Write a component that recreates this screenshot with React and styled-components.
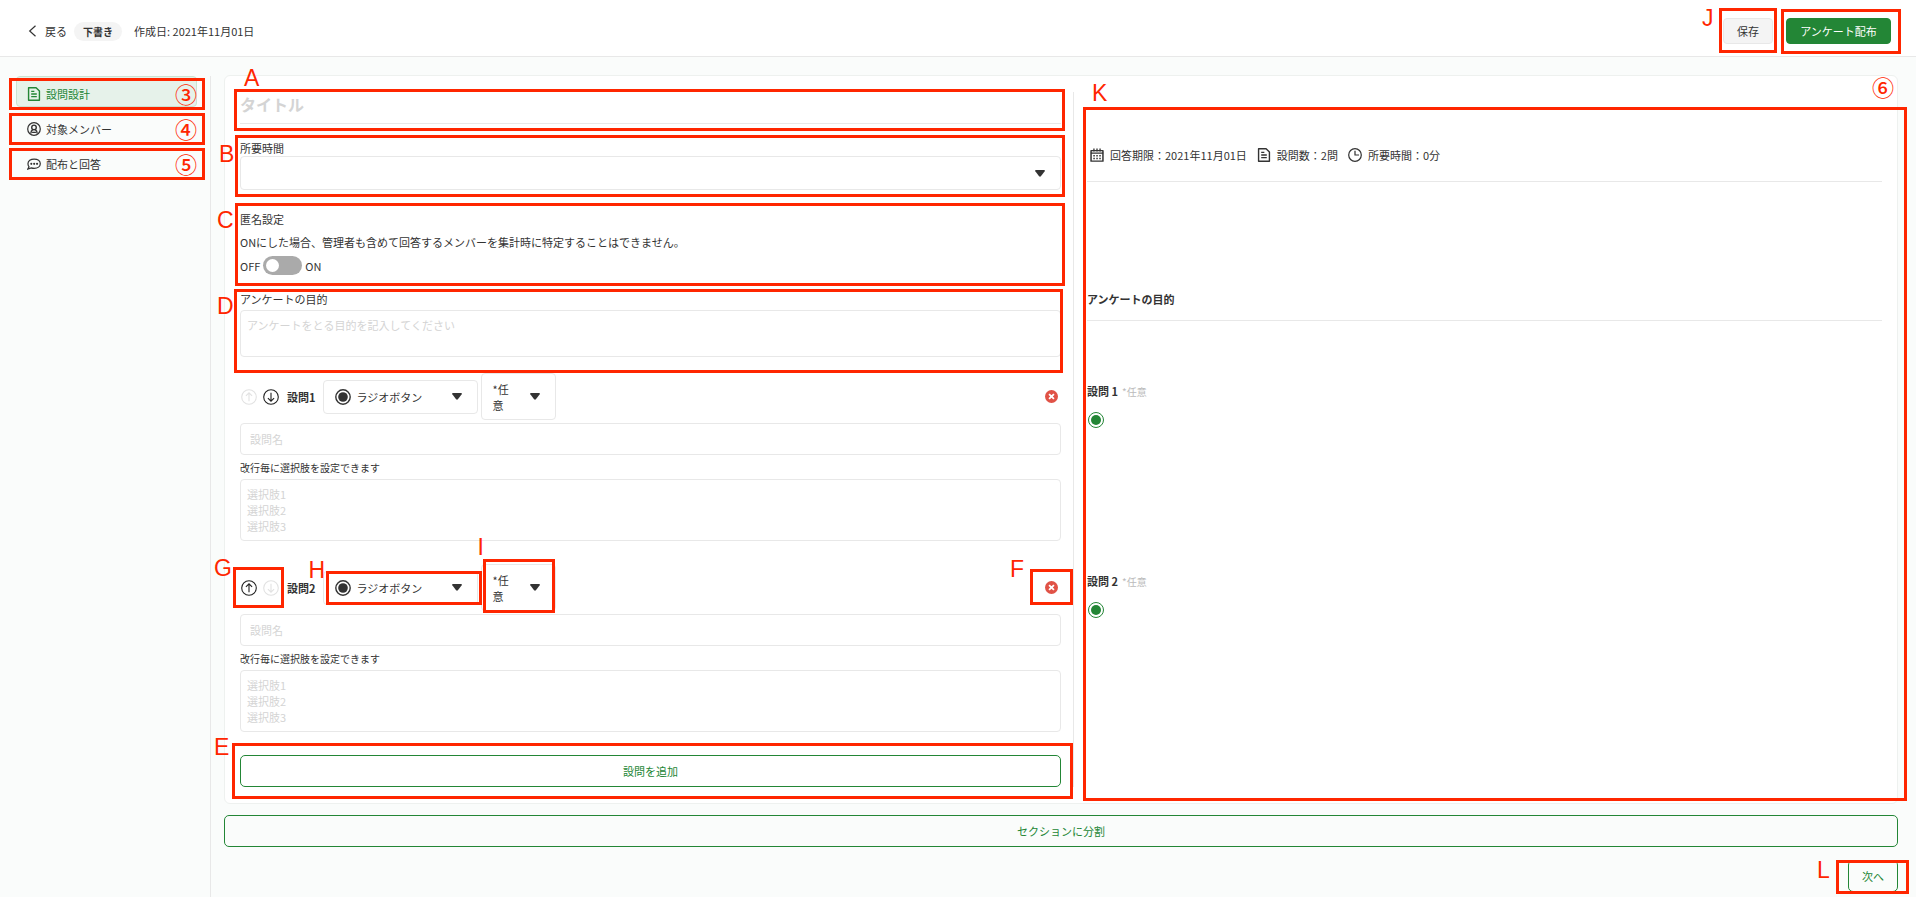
import React, { useState } from "react";
import styled, { createGlobalStyle } from "styled-components";

const GREEN = "#238636";
const RED = "#ff2600";
const LINE = "#e8e8e8";
const HINT = "#d4d4d4";

const GlobalStyle = createGlobalStyle`
  * {
    box-sizing: border-box;
  }

  body {
    margin: 0;
    background: #fafcfb;
    color: #333;
    font-family: "Noto Sans CJK JP", "Noto Sans", sans-serif;
    font-size: 11px;
    line-height: 16px;
  }

  button,
  input,
  select,
  textarea {
    font: inherit;
    color: inherit;
  }

  ::placeholder {
    color: ${HINT};
    opacity: 1;
  }
`;

const Page = styled.div`
  min-height: 100vh;
  display: flex;
  flex-direction: column;
`;

const Header = styled.header`
  display: flex;
  justify-content: space-between;
  align-items: center;
  padding: 18px 25px 12px 28px;
  background: #fff;
  border-bottom: 1px solid ${LINE};
`;

const HeaderGroup = styled.div`
  display: flex;
  align-items: center;
  gap: ${(props) => props.$gap || 0}px;
`;

const BackLink = styled.a`
  display: flex;
  align-items: center;
  gap: 8px;
  color: inherit;
  text-decoration: none;
`;

const Badge = styled.span`
  margin: 0 12px 0 7px;
  padding: 2px 9px 1px;
  border-radius: 10px;
  background: #f4f4f4;
  font-size: 10px;
  font-weight: 700;
`;

const Anchor = styled.div`
  position: relative;
`;

const Button = styled.button`
  display: block;
  height: 26px;
  width: ${(props) => props.$width}px;
  padding: 0;
  border: 1px solid ${(props) => (props.$primary ? GREEN : LINE)};
  border-radius: 4px;
  background: ${(props) => (props.$primary ? GREEN : "#f4f4f4")};
  color: ${(props) => (props.$primary ? "#fff" : "#333")};
  cursor: pointer;
`;

const OutlineButton = styled.button`
  display: block;
  width: ${(props) => (props.$width ? `${props.$width}px` : "100%")};
  height: 32px;
  padding: 0;
  border: 1px solid ${GREEN};
  border-radius: 5px;
  background: transparent;
  color: ${GREEN};
  cursor: pointer;
`;

const Body = styled.div`
  flex: 1;
  display: flex;
`;

const Sidebar = styled.nav`
  flex: 0 0 211px;
  display: flex;
  flex-direction: column;
  gap: 4px;
  margin-top: 19px;
  padding: 0 13px 0 16px;
  border-right: 1px solid ${LINE};
`;

const NavItem = styled.a`
  position: relative;
  display: flex;
  align-items: center;
  gap: 5px;
  height: 31px;
  padding: 4px 0 0 10px;
  border: 1px solid ${(props) => (props.$active ? "#cbe3d2" : "transparent")};
  border-radius: 4px;
  background: ${(props) => (props.$active ? "#e6f2ea" : "transparent")};
  color: ${(props) => (props.$active ? GREEN : "#333")};
  text-decoration: none;
`;

const Main = styled.main`
  flex: 1;
  min-width: 0;
  padding: 18px 18px 5px 13px;
`;

const Card = styled.section`
  position: relative;
  display: flex;
  margin-bottom: 11px;
  padding: 16px 15px;
  border: 1px solid #eef1ef;
  border-radius: 6px;
  background: #fff;
`;

const Editor = styled.form`
  flex: 0 0 50%;
  box-sizing: content-box;
  padding-right: 12px;
  border-right: 1px solid ${LINE};
`;

const Preview = styled.div`
  flex: 1;
  min-width: 0;
  padding-left: 13px;
`;

const Block = styled.div`
  position: relative;
  margin-bottom: ${(props) => props.$space || 0}px;
`;

const TitleInput = styled.input`
  display: block;
  width: 100%;
  height: 32px;
  padding: 0 0 8px;
  border: 0;
  border-bottom: 1px solid ${LINE};
  background: transparent;
  font-size: 16px;
  font-weight: 700;
`;

const Label = styled.label`
  display: block;
  margin-bottom: ${(props) => props.$space || 0}px;
`;

const SmallLabel = styled.label`
  display: block;
  margin: 5px 0 3px;
  font-size: 10px;
`;

const TextInput = styled.input`
  display: block;
  width: 100%;
  height: 32px;
  margin-top: 3px;
  padding: 0 9px;
  border: 1px solid ${LINE};
  border-radius: 4px;
  background: #fff;
`;

const TextArea = styled.textarea`
  display: block;
  width: 100%;
  height: ${(props) => props.$height}px;
  padding: 6px;
  border: 1px solid ${LINE};
  border-radius: 4px;
  background: #fff;
  resize: none;
  overflow: hidden;
`;

const SelectBox = styled.div`
  position: relative;
  display: flex;
  align-items: center;
  width: ${(props) => (props.$width ? `${props.$width}px` : "100%")};
  height: ${(props) => props.$height || 34}px;
  border: 1px solid ${LINE};
  border-radius: 4px;
  background: #fff;

  > svg {
    position: absolute;
    pointer-events: none;
  }

  > svg:first-child {
    left: 11px;
  }

  > svg:last-child {
    right: 15px;
  }
`;

const Select = styled.select`
  width: 100%;
  height: 100%;
  padding: 0 30px 0 ${(props) => props.$indent || 11}px;
  border: 0;
  background: transparent;
  appearance: none;
  cursor: pointer;
`;

// the closed box wraps its text, so the select itself lies invisible on top
const CoverSelect = styled(Select)`
  position: absolute;
  inset: 0;
  opacity: 0;
`;

const WrappedValue = styled.span`
  width: 27px;
  margin-left: 11px;
  word-break: break-all;
`;

const SwitchRow = styled.label`
  display: flex;
  align-items: center;
  gap: 3px;
  margin-top: 6px;
`;

const Switch = styled.input`
  appearance: none;
  width: 39px;
  height: 19px;
  margin: 0;
  padding: 3px;
  border-radius: 10px;
  background: #aaa;
  cursor: pointer;

  &::before {
    content: "";
    display: block;
    width: 13px;
    height: 13px;
    border-radius: 50%;
    background: #fff;
  }

  &:checked {
    background: ${GREEN};
  }

  &:checked::before {
    margin-left: auto;
  }
`;

const Paragraph = styled.p`
  margin: 7px 0 0;
`;

const QuestionBar = styled.div`
  display: flex;
  align-items: center;
  height: 47px;
`;

const Arrows = styled.div`
  position: relative;
  display: flex;
  gap: 6px;
  padding-left: 1px;
`;

const IconButton = styled.button`
  display: block;
  padding: 0;
  border: 0;
  background: transparent;
  color: #222;
  line-height: 0;
  cursor: pointer;

  &:disabled {
    color: #e2e2e2;
    cursor: default;
  }
`;

const QuestionName = styled.strong`
  margin: 0 7px 0 8px;
`;

const Cell = styled.div`
  position: relative;
  margin-right: 3px;
`;

const DeleteCell = styled.div`
  position: relative;
  margin-left: auto;
  padding-right: 3px;
`;

const Meta = styled.div`
  display: flex;
  gap: 10px;
  padding: 55px 0 18px 3px;
  border-bottom: 1px solid ${LINE};
`;

const MetaItem = styled.span`
  display: flex;
  align-items: center;
  gap: 6px;
`;

const PreviewHeading = styled.h2`
  margin: 109px 0 62px;
  padding-bottom: 13px;
  border-bottom: 1px solid ${LINE};
  font-size: 11px;
  font-weight: 700;
`;

const PreviewQuestion = styled.div`
  min-height: 190px;
`;

const PreviewName = styled.h3`
  margin: 0 0 12px;
  font-size: 11px;
  font-weight: 700;
`;

const Optional = styled.span`
  margin-left: 4px;
  color: #bbb;
  font-size: 10px;
  font-weight: 400;
`;

const Radio = styled.input`
  appearance: none;
  display: block;
  width: 16px;
  height: 16px;
  margin: 0 0 0 1px;
  padding: 2px;
  border: 1px solid ${GREEN};
  border-radius: 50%;
  background-clip: content-box;

  &:checked {
    background-color: ${GREEN};
  }
`;

const Footer = styled.div`
  display: flex;
  justify-content: flex-end;
  margin-top: 13px;
`;

// red review marks drawn over the form
const Frame = styled.span`
  position: absolute;
  z-index: 2;
  inset: ${(props) => props.$inset};
  border: 3px solid ${RED};
  pointer-events: none;
`;

const Letter = styled.span`
  position: absolute;
  z-index: 3;
  left: ${(props) => props.$left}px;
  top: ${(props) => props.$top}px;
  color: ${RED};
  font-family: "Liberation Sans", Arial, sans-serif;
  font-size: 23px;
  font-weight: 400;
  line-height: 16px;
  pointer-events: none;
`;

const Num = styled.span`
  position: absolute;
  z-index: 3;
  right: ${(props) => props.$right}px;
  top: ${(props) => props.$top}px;
  color: ${RED};
  font-size: 22px;
  font-weight: 500;
  line-height: 22px;
  pointer-events: none;
`;

const Svg = ({ size = 14, children, ...rest }) => (
  <svg
    width={size}
    height={size}
    viewBox="0 0 16 16"
    fill="none"
    stroke="currentColor"
    strokeWidth="1.4"
    aria-hidden="true"
    {...rest}
  >
    {children}
  </svg>
);

const FileIcon = () => (
  <Svg>
    <path d="M1.8 .8h8.600l3.800 3.800v10.600H1.800z" strokeWidth="1.6" strokeLinejoin="round" />
    <path d="M4.800 5h3.600M4.800 8h6.400M4.800 11h6.400" strokeWidth="1.500" />
  </Svg>
);

const MemberIcon = () => (
  <Svg>
    <circle cx="8" cy="8" r="7.200" />
    <circle cx="8" cy="6.200" r="2.600" strokeWidth="1.600" />
    <path
      d="M4.400 13.200c0-2.400.8-3.700 2.200-4.500M11.600 13.200c0-2.400-.8-3.700-2.200-4.500M5.800 11.800h4.400"
      strokeWidth="1.600"
    />
  </Svg>
);

const ChatIcon = () => (
  <Svg>
    <path d="M8.200 2.300c4 0 7 2.300 7 5.400s-3 5.400-7 5.400c-1.200 0-2.300-.2-3.300-.6L1 13.700l1.300-2.500C1.500 10.200 1.100 9 1.100 7.700c0-3.100 3.100-5.400 7.100-5.400z" />
    <g fill="currentColor" stroke="none">
      <circle cx="4.900" cy="7.800" r="1.200" />
      <circle cx="8.200" cy="7.800" r="1.200" />
      <circle cx="11.500" cy="7.800" r="1.200" />
    </g>
  </Svg>
);

const CalendarIcon = () => (
  <Svg>
    <path d="M1.200 3h13.600v12H1.200z" strokeWidth="1.700" strokeLinejoin="round" />
    <path d="M1 5.800h14M4.500 .5v3.500M8 .5v3.500M11.500 .5v3.500" strokeWidth="1.500" />
    <path
      d="M3.800 8.800h1.700M7.200 8.800h1.700M10.600 8.800h1.700M3.800 12h1.700M7.200 12h1.700M10.600 12h1.700"
      strokeWidth="1.800"
    />
  </Svg>
);

const ClockIcon = () => (
  <Svg>
    <circle cx="8" cy="8" r="7.200" />
    <path d="M8 3.200V8h4.600" />
  </Svg>
);

const ArrowIcon = ({ down }) => (
  <Svg size={16} strokeWidth="1.100">
    <circle cx="8" cy="8" r="7.300" />
    {down ? (
      <path d="M8 3.800v8.400M4.900 9.100L8 12.200l3.100-3.100" />
    ) : (
      <path d="M8 12.200V3.800M4.900 6.900L8 3.800l3.100 3.100" />
    )}
  </Svg>
);

const DeleteIcon = () => (
  <Svg size={13}>
    <circle cx="8" cy="8" r="8" fill="#e05246" stroke="none" />
    <path d="M5 5l6 6M11 5l-6 6" stroke="#fff" strokeWidth="2.200" />
  </Svg>
);

const RadioIcon = () => (
  <Svg size={16}>
    <circle cx="8" cy="8" r="7.200" />
    <circle cx="8" cy="8" r="4.800" fill="currentColor" stroke="none" />
  </Svg>
);

const Caret = () => (
  <svg width="10" height="7" viewBox="0 0 10 7" aria-hidden="true">
    <path d="M.8 0h8.400q1 .4.500 1.200L5.900 6.300q-.9.900-1.800 0L.3 1.200Q-.2.400.8 0z" fill="#333" />
  </svg>
);

const navItems = [
  { label: "設問設計", mark: "③", icon: <FileIcon /> },
  { label: "対象メンバー", mark: "④", icon: <MemberIcon /> },
  { label: "配布と回答", mark: "⑤", icon: <ChatIcon /> },
];

const questions = [1, 2];

const Question = ({ number, last, marked }) => {
  return (
    <Block $space={23}>
      <QuestionBar>
        <Arrows>
          <IconButton type="button" aria-label="上へ" disabled={number === 1}>
            <ArrowIcon />
          </IconButton>
          <IconButton type="button" aria-label="下へ" disabled={last}>
            <ArrowIcon down />
          </IconButton>
          {marked && <Frame $inset="-13px -5px -12px -7px" />}
          {marked && <Letter $left={-26} $top={-20}>G</Letter>}
        </Arrows>
        <QuestionName>設問{number}</QuestionName>
        <Cell>
          <SelectBox $width={155}>
            <RadioIcon />
            <Select $indent={33} aria-label="回答形式">
              <option>ラジオボタン</option>
              <option>チェックボックス</option>
            </Select>
            <Caret />
          </SelectBox>
          {marked && <Frame $inset="0 -4px 0 3px" />}
          {marked && <Letter $left={-14} $top={-9}>H</Letter>}
        </Cell>
        <Cell>
          <SelectBox $width={75} $height={47}>
            <WrappedValue aria-hidden="true">*任意</WrappedValue>
            <CoverSelect aria-label="必須設定">
              <option>*任意</option>
              <option>*必須</option>
            </CoverSelect>
            <Caret />
          </SelectBox>
          {marked && <Frame $inset="-5px 1px -2px 2px" />}
          {marked && <Letter $left={-3} $top={-25}>I</Letter>}
        </Cell>
        <DeleteCell>
          <IconButton type="button" aria-label="削除">
            <DeleteIcon />
          </IconButton>
          {marked && <Frame $inset="-12px -12px -11px -15px" />}
          {marked && <Letter $left={-35} $top={-20}>F</Letter>}
        </DeleteCell>
      </QuestionBar>
      <TextInput placeholder="設問名" aria-label={`設問${number}の設問名`} />
      <SmallLabel htmlFor={`choices-${number}`}>
        改行毎に選択肢を設定できます
      </SmallLabel>
      <TextArea
        id={`choices-${number}`}
        $height={62}
        placeholder={"選択肢1\n選択肢2\n選択肢3"}
      />
    </Block>
  );
};

export default function App() {
  const [anonymous, setAnonymous] = useState(false);

  return (
    <Page>
      <GlobalStyle />
      <Header>
        <HeaderGroup>
          <BackLink href="#back">
            <Svg width="9" height="12" viewBox="0 0 9 12" strokeWidth="1.200">
              <path d="M7.500 .8L1.700 6l5.800 5.200" />
            </Svg>
            戻る
          </BackLink>
          <Badge>下書き</Badge>
          <span>作成日: 2021年11月01日</span>
        </HeaderGroup>
        <HeaderGroup $gap={13}>
          <Anchor>
            <Button $width={50}>保存</Button>
            <Frame $inset="-10px -4px -9px -4px" />
            <Letter $left={-21} $top={-8}>J</Letter>
          </Anchor>
          <Anchor>
            <Button $width={105} $primary>
              アンケート配布
            </Button>
            <Frame $inset="-9px -10px -10px -5px" />
          </Anchor>
        </HeaderGroup>
      </Header>

      <Body>
        <Sidebar>
          {navItems.map((item, index) => (
            <NavItem key={item.label} href="#" $active={index === 0}>
              {item.icon}
              {item.label}
              <Frame $inset="1px -9px -4px -8px" />
              <Num $right={-1} $top={5}>{item.mark}</Num>
            </NavItem>
          ))}
        </Sidebar>

        <Main>
          <Card>
            <Editor>
              <Block $space={16}>
                <TitleInput placeholder="タイトル" aria-label="タイトル" />
                <Frame $inset="-3px -4px -7px -6px" />
                <Letter $left={4} $top={-22}>A</Letter>
              </Block>
              <Block $space={21}>
                <Label htmlFor="duration">所要時間</Label>
                <SelectBox>
                  <Select id="duration">
                    <option></option>
                    <option>5分</option>
                    <option>10分</option>
                  </Select>
                  <Caret />
                </SelectBox>
                <Frame $inset="-5px -4px -7px -5px" />
                <Letter $left={-21} $top={6}>B</Letter>
              </Block>
              <Block $space={16}>
                <div>匿名設定</div>
                <Paragraph>
                  ONにした場合、管理者も含めて回答するメンバーを集計時に特定することはできません。
                </Paragraph>
                <SwitchRow>
                  OFF
                  <Switch
                    type="checkbox"
                    checked={anonymous}
                    onChange={(e) => setAnonymous(e.target.checked)}
                  />
                  ON
                </SwitchRow>
                <Frame $inset="-8px -4px -11px -5px" />
                <Letter $left={-23} $top={1}>C</Letter>
              </Block>
              <Block $space={16}>
                <Label htmlFor="purpose" $space={3}>
                  アンケートの目的
                </Label>
                <TextArea
                  id="purpose"
                  $height={47}
                  placeholder="アンケートをとる目的を記入してください"
                />
                <Frame $inset="-2px -2px -16px -6px" />
                <Letter $left={-23} $top={7}>D</Letter>
              </Block>

              {questions.map((number) => (
                <Question
                  key={number}
                  number={number}
                  last={number === questions.length}
                  marked={number === 2}
                />
              ))}

              <Anchor>
                <OutlineButton type="button">設問を追加</OutlineButton>
                <Frame $inset="-12px -12px -12px -8px" />
                <Letter $left={-26} $top={-16}>E</Letter>
              </Anchor>
            </Editor>

            <Preview>
              <Meta>
                <MetaItem>
                  <CalendarIcon />
                  回答期限：2021年11月01日
                </MetaItem>
                <MetaItem>
                  <FileIcon />
                  設問数：2問
                </MetaItem>
                <MetaItem>
                  <ClockIcon />
                  所要時間：0分
                </MetaItem>
              </Meta>
              <PreviewHeading>アンケートの目的</PreviewHeading>
              {questions.map((number) => (
                <PreviewQuestion key={number}>
                  <PreviewName>
                    設問 {number}
                    <Optional>*任意</Optional>
                  </PreviewName>
                  <Radio
                    type="radio"
                    name={`answer-${number}`}
                    aria-label={`設問 ${number}`}
                    defaultChecked
                  />
                </PreviewQuestion>
              ))}
            </Preview>
            <Frame $inset="31px -10px 2px calc(50% + 22px)" />
            <Letter $left={867} $top={9}>K</Letter>
            <Num $right={3} $top={-1}>⑥</Num>
          </Card>

          <OutlineButton type="button">セクションに分割</OutlineButton>

          <Footer>
            <Anchor>
              <OutlineButton type="button" $width={50}>
                次へ
              </OutlineButton>
              <Frame $inset="0 -11px -2px -12px" />
              <Letter $left={-31} $top={2}>L</Letter>
            </Anchor>
          </Footer>
        </Main>
      </Body>
    </Page>
  );
}
